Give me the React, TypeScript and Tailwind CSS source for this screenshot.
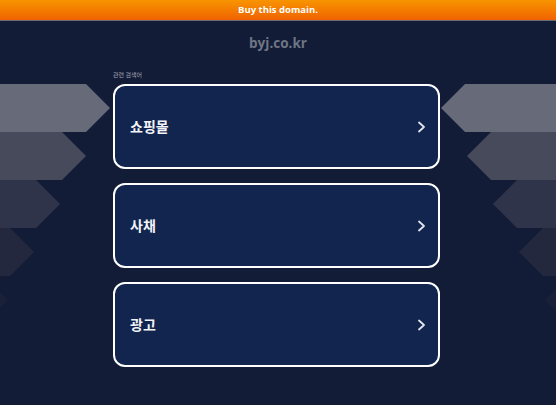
import React from 'react';

const items = ['쇼핑몰', '사채', '광고'];

const arrows = [
  { y: 84, tip: 110, rtip: 441, color: '#676a79' },
  { y: 132, tip: 86, rtip: 467, color: '#474a5b' },
  { y: 180, tip: 60, rtip: 493, color: '#30344a' },
  { y: 228, tip: 34, rtip: 519, color: '#23283e' },
  { y: 276, tip: 8, rtip: 545, color: '#1a2037' },
];

const Arrows = () => (
  <svg className="absolute inset-0 pointer-events-none" width="556" height="405" viewBox="0 0 556 405">
    {arrows.map((a, i) => (
      <g key={i}>
        <polygon
          points={`0,${a.y} ${a.tip - 24},${a.y} ${a.tip},${a.y + 24} ${a.tip - 24},${a.y + 48} 0,${a.y + 48}`}
          fill={a.color}
        />
        <polygon
          points={`556,${a.y} ${a.rtip + 24},${a.y} ${a.rtip},${a.y + 24} ${a.rtip + 24},${a.y + 48} 556,${a.y + 48}`}
          fill={a.color}
        />
      </g>
    ))}
  </svg>
);

const Chevron = () => (
  <svg width="9" height="12" viewBox="0 0 9 12" fill="none">
    <path d="M2 1.5 L7 6 L2 10.5" stroke="#e3e6ee" strokeWidth="1.8" strokeLinecap="round" strokeLinejoin="round" />
  </svg>
);

export default function App() {
  return (
    <div className="relative w-[556px] h-[405px] overflow-hidden bg-[#121c37] font-['Noto_Sans','Noto_Sans_CJK_KR',sans-serif]">
      <Arrows />
      <div className="relative flex flex-col">
        <div className="h-[20px] flex items-center justify-center bg-gradient-to-b from-[#f89400] to-[#f06200] border-b border-[#6a6a70] box-content">
          <span className="text-white text-[9.5px] font-bold font-['Open_Sans',sans-serif]">Buy this domain.</span>
        </div>
        <div className="h-[44px] flex items-center justify-center">
          <span className="text-[#6f7584] text-[13.5px] font-bold font-['Open_Sans',sans-serif]">byj.co.kr</span>
        </div>
        <div className="w-[327px] ml-[113px] flex flex-col">
          <div className="h-[19px] flex items-center text-[6px] text-[#a4a8b4] font-['Noto_Sans_CJK_KR',sans-serif]">관련 검색어</div>
          <div className="flex flex-col gap-[14px]">
            {items.map((t) => (
              <div
                key={t}
                className="h-[85px] rounded-[12px] border-2 border-white bg-[#11254f] flex items-center justify-between pl-[15px] pr-[12px]"
              >
                <span className="text-[#f2f4f8] text-[14px] font-bold font-['Noto_Sans_CJK_KR',sans-serif]">{t}</span>
                <Chevron />
              </div>
            ))}
          </div>
        </div>
      </div>
    </div>
  );
}
